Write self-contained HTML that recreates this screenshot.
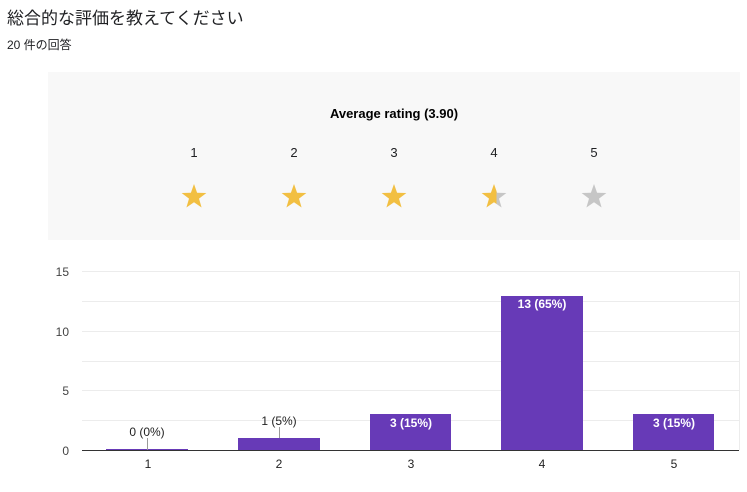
<!DOCTYPE html>
<html><head><meta charset="utf-8"><style>
body{margin:0;width:747px;height:492px;background:#fff;font-family:"Liberation Sans","Noto Sans CJK JP",sans-serif;overflow:hidden;position:relative}
.t{position:absolute;left:7px;top:4px;font-size:17px;color:#202124}
.s{position:absolute;left:7px;top:36px;font-size:12px;color:#202124}
.p{position:absolute;left:48px;top:72px;width:692px;height:168px;background:#f8f8f8}
</style></head><body>
<div class="t">総合的な評価を教えてください</div>
<div class="s">20 件の回答</div>
<div class="p"></div>
<svg width="747" height="492" style="position:absolute;left:0;top:0" font-family="Liberation Sans, sans-serif">
<defs>
<path id="st" d="M0,-13 L3.1,-4.2 L12.4,-4 L5,1.6 L7.6,10.5 L0,5.2 L-7.6,10.5 L-5,1.6 L-12.4,-4 L-3.1,-4.2Z"/>
<linearGradient id="hg" x1="0" x2="1" y1="0" y2="0"><stop offset="0.6" stop-color="#f2bf42"/><stop offset="0.6" stop-color="#c6c6c6"/></linearGradient>
</defs>
<text x="394" y="118" font-size="13" font-weight="bold" text-anchor="middle" fill="#000">Average rating (3.90)</text>
<g font-size="13" text-anchor="middle" fill="#202124">
<text x="194" y="157">1</text><text x="294" y="157">2</text><text x="394" y="157">3</text><text x="494" y="157">4</text><text x="594" y="157">5</text></g>
<use href="#st" x="194" y="197" fill="#f2bf42"/>
<use href="#st" x="294" y="197" fill="#f2bf42"/>
<use href="#st" x="394" y="197" fill="#f2bf42"/>
<path transform="translate(494 197)" d="M0,-13 L3.1,-4.2 L12.4,-4 L5,1.6 L7.6,10.5 L0,5.2 L-7.6,10.5 L-5,1.6 L-12.4,-4 L-3.1,-4.2Z" fill="url(#hg)"/>
<use href="#st" x="594" y="197" fill="#c6c6c6"/>
<g stroke="#ececec" stroke-width="1">
<line x1="82" x2="739" y1="271.5" y2="271.5"/><line x1="82" x2="739" y1="301.5" y2="301.5"/>
<line x1="82" x2="739" y1="331.5" y2="331.5"/><line x1="82" x2="739" y1="361.5" y2="361.5"/>
<line x1="82" x2="739" y1="390.5" y2="390.5"/><line x1="82" x2="739" y1="420.5" y2="420.5"/>
<line x1="739.5" x2="739.5" y1="271" y2="450"/></g>
<g font-size="12" fill="#444" text-anchor="end">
<text x="69" y="276">15</text><text x="69" y="336">10</text><text x="69" y="395">5</text><text x="69" y="455">0</text></g>
<g fill="#673ab7">
<rect x="106" y="449" width="82" height="1"/>
<rect x="238" y="438" width="82" height="12"/>
<rect x="370" y="414" width="81" height="36"/>
<rect x="501" y="296" width="82" height="154"/>
<rect x="633" y="414" width="81" height="36"/></g>
<line x1="82" x2="739" y1="450.5" y2="450.5" stroke="#333"/>
<g stroke="#999"><line x1="147.5" x2="147.5" y1="438" y2="450"/><line x1="279.5" x2="279.5" y1="427" y2="438"/></g>
<g font-size="12" text-anchor="middle" fill="#222">
<text x="147" y="436">0 (0%)</text><text x="279" y="425">1 (5%)</text>
<text x="148" y="468">1</text><text x="279" y="468">2</text><text x="411" y="468">3</text><text x="542" y="468">4</text><text x="674" y="468">5</text></g>
<g font-size="12" font-weight="bold" text-anchor="middle" fill="#fff">
<text x="411" y="427">3 (15%)</text><text x="542" y="308">13 (65%)</text><text x="674" y="427">3 (15%)</text></g>
</svg>
</body></html>
